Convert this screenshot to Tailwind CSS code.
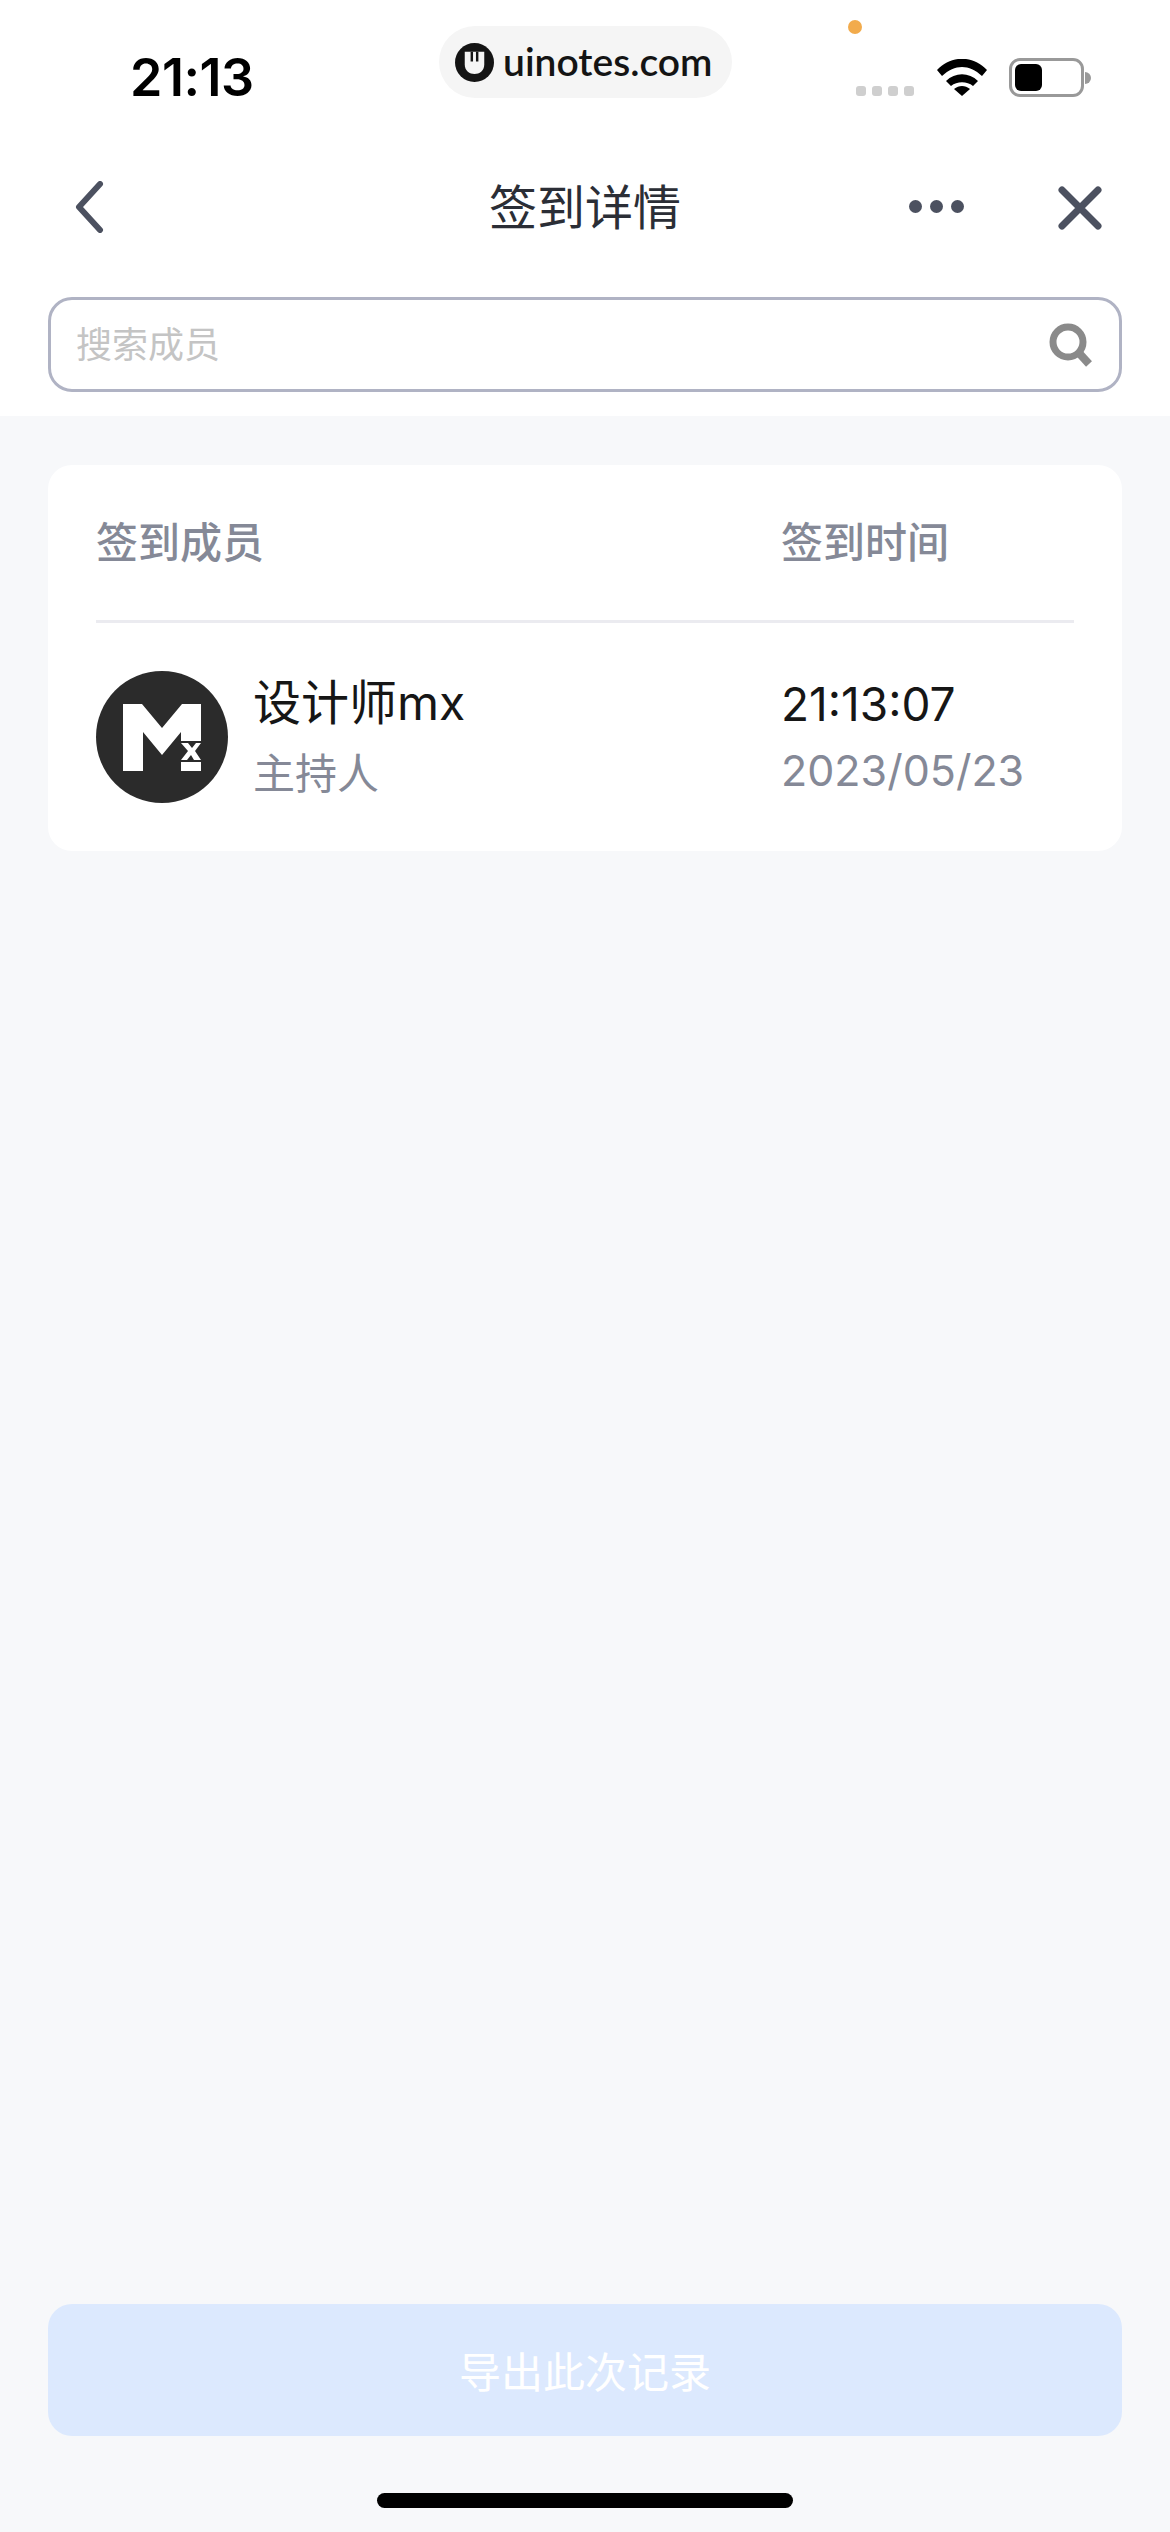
<!DOCTYPE html>
<html lang="zh-CN">
<head>
  <meta charset="UTF-8" />
  <title>签到详情</title>
  <meta name="viewport" content="width=device-width, initial-scale=1.0" />
  <script src="https://cdn.jsdelivr.net/npm/@tailwindcss/browser@4"></script>
</head>
<body class="bg-[#f7f8fa] font-['Inter','Noto_Sans_CJK_SC',sans-serif]">
  <div class="w-[1170px] h-[2532px] flex flex-col">

    <!-- top white area -->
    <div class="bg-white h-[416px] shrink-0">
      <!-- status bar -->
      <div class="relative h-[146px] flex items-start pl-[130px] pr-[79px]">
        <span class="mt-[50px] text-[52px] leading-[56px] font-semibold text-black w-[309px] tracking-[-0.5px]">21:13</span>
        <div class="mt-[26px] w-[293px] h-[72px] rounded-[36px] bg-[#f5f5f5] flex items-center pl-[16px] gap-[9px]">
          <svg width="39" height="39" viewBox="0 0 40 40">
            <circle cx="20" cy="20" r="20" fill="#141414" />
            <path d="M10 9h20v13c0 13-20 13-20 0z" fill="#f5f5f5" />
            <path d="M16 9h2.5v10h-2.5zM21.5 9h2.5v10h-2.5z" fill="#141414" />
          </svg>
          <span class="text-[39px] leading-[44px] mb-[2px] font-semibold text-[#141414] font-['Lato',sans-serif]">uinotes.com</span>
        </div>
        <div class="absolute left-[848px] top-[20px] w-[14px] h-[14px] rounded-full bg-[#f2ab4c]"></div>
        <div class="ml-auto mt-[58px] flex items-end">
          <div class="flex gap-[6px] mb-[1px]">
            <div class="w-[10px] h-[10px] rounded-[3px] bg-[#cfcfcf]"></div>
            <div class="w-[10px] h-[10px] rounded-[3px] bg-[#cfcfcf]"></div>
            <div class="w-[10px] h-[10px] rounded-[3px] bg-[#cfcfcf]"></div>
            <div class="w-[10px] h-[10px] rounded-[3px] bg-[#cfcfcf]"></div>
          </div>
          <svg width="50" height="37" viewBox="0 0 50 37" class="ml-[23px] mb-[1px]">
            <path d="M0 11C14 -4 36 -4 50 11l-5 6C32 5 18 5 5 17z" fill="#000" />
            <path d="M9 22c9-9 23-9 32 0l-5 5c-6-5-16-5-22 0z" fill="#000" />
            <path d="M17 30c5-4 11-4 16 0l-8 7z" fill="#000" />
          </svg>
          <div class="flex items-center gap-[1px] ml-[22px]">
            <div class="w-[75px] h-[39px] rounded-[11px] border-[3px] border-[#999] p-[3px] flex">
              <div class="w-[27px] rounded-[6px] bg-black"></div>
            </div>
            <div class="w-[6px] h-[12px] rounded-r-full bg-[#999]"></div>
          </div>
        </div>
      </div>

      <!-- nav bar -->
      <div class="relative h-[120px] flex items-center justify-center pt-[3px]">
        <svg class="absolute left-[74px] top-[35px]" width="30" height="52" viewBox="0 0 30 52" fill="none">
          <path d="M26 3L5 26l21 23" stroke="#4c5160" stroke-width="6" stroke-linecap="round" stroke-linejoin="round" />
        </svg>
        <span class="text-[48px] leading-[60px] text-[#2b2e36]">签到详情</span>
        <div class="absolute left-[909px] top-[54px] flex gap-[8px]">
          <div class="w-[13px] h-[13px] rounded-full bg-[#4c5160]"></div>
          <div class="w-[13px] h-[13px] rounded-full bg-[#4c5160]"></div>
          <div class="w-[13px] h-[13px] rounded-full bg-[#4c5160]"></div>
        </div>
        <svg class="absolute left-[1058px] top-[40px]" width="44" height="44" viewBox="0 0 44 44" fill="none">
          <path d="M4 4l36 36M40 4L4 40" stroke="#4c5160" stroke-width="7" stroke-linecap="round" />
        </svg>
      </div>

      <!-- search -->
      <div class="px-[48px] mt-[31px]">
        <div class="h-[95px] rounded-[24px] border-[3px] border-[#b0b3c4] flex items-center justify-between pl-[25px] pr-[26px]">
          <span class="text-[36px] leading-[44px] text-[#c4c4c4]">搜索成员</span>
          <svg width="44" height="44" viewBox="0 0 44 44" fill="none">
            <circle cx="19" cy="19" r="15" stroke="#8a8a8a" stroke-width="7" />
            <path d="M30 30l10 11" stroke="#8a8a8a" stroke-width="8" />
          </svg>
        </div>
      </div>
    </div>

    <!-- list card -->
    <div class="mx-[48px] mt-[49px] h-[386px] bg-white rounded-[24px] px-[48px]">
      <div class="h-[158px] border-b-[3px] border-[#ebebf0] flex items-center text-[42px] leading-[50px] font-medium text-[#858997]">
        <span class="w-[685px]">签到成员</span>
        <span>签到时间</span>
      </div>
      <div class="flex items-center mt-[48px]">
        <div class="w-[132px] h-[132px] rounded-full bg-[#2b2b2b] flex items-center justify-center">
          <svg width="78" height="67" viewBox="0 0 78 67">
            <path d="M0 0h19l20 24L59 0h19v37H58V28L39 51 20 28v39H0z" fill="#fff" />
            <path d="M58 39h7l4 5 4-5h5l-6 8 6 9h-7l-3-5-4 5h-6l7-9z" fill="#fff" />
            <rect x="58" y="58" width="20" height="9" fill="#fff" />
          </svg>
        </div>
        <div class="ml-[25px] w-[528px] self-start pt-[2px]">
          <div class="text-[48px] leading-[60px] text-[#161616]">设计师mx</div>
          <div class="text-[42px] leading-[50px] mt-[16px] text-[#858997]">主持人</div>
        </div>
        <div>
          <div class="text-[46px] leading-[56px] -mt-[3px] text-[#161616]">21:13:07</div>
          <div class="text-[43px] leading-[50px] mt-[13px] text-[#858997]">2023/05/23</div>
        </div>
      </div>
    </div>

    <!-- export button -->
    <div class="mt-auto mx-[48px] h-[132px] rounded-[24px] bg-[#dce9fe] flex items-center justify-center pt-[6px]">
      <span class="text-[42px] leading-[50px] text-white">导出此次记录</span>
    </div>

    <!-- home indicator -->
    <div class="h-[96px] flex justify-center pt-[57px] shrink-0">
      <div class="w-[416px] h-[15px] rounded-full bg-black"></div>
    </div>
  </div>
</body>
</html>
